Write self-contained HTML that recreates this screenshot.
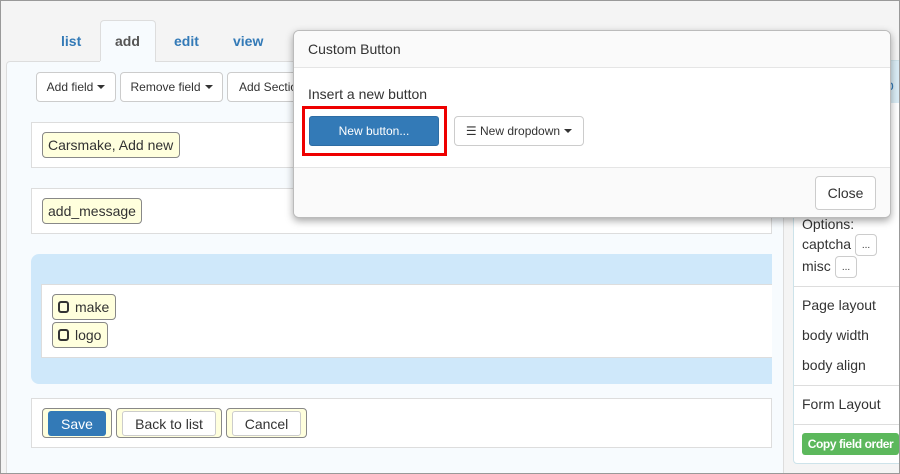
<!DOCTYPE html>
<html><head><style>
*{box-sizing:border-box;margin:0;padding:0}
html,body{width:900px;height:474px;overflow:hidden}
body{font-family:"Liberation Sans",sans-serif;font-size:14px;color:#333;background:#f4f4f4;position:relative}
.a{position:absolute}
.frame{left:0;top:0;width:900px;height:474px;border:1px solid #999}
.tab{font-weight:bold;color:#337ab7;font-size:14px;top:33px}
.btn{position:absolute;background:#fff;border:1px solid #ccc;border-radius:4px;font-size:12px;display:flex;align-items:center;justify-content:center;color:#333}
.caret{display:inline-block;border-top:4px solid #333;border-left:4px solid transparent;border-right:4px solid transparent;margin-left:4px}
.row{position:absolute;left:31px;width:741px;background:#fff;border:1px solid #ddd}
.tag{position:absolute;background:#ffffdd;border:1px solid #888;border-radius:4px;font-size:14px;display:flex;align-items:center;padding-left:5px}
.cb{display:inline-block;width:11px;height:12px;border:2.5px solid #333;border-radius:3px;margin-right:6px}
.side{font-size:14px;color:#333;left:802px}
.hr{position:absolute;left:794px;width:106px;height:1px;background:#ddd}
</style></head><body>
<div class="a" style="left:100px;top:20px;width:56px;height:44px;background:#f7fbfe;border:1px solid #ddd;border-bottom:none;border-radius:4px 4px 0 0"></div>
<div class="a tab" style="left:61px">list</div>
<div class="a tab" style="left:115px;color:#555">add</div>
<div class="a tab" style="left:174px">edit</div>
<div class="a tab" style="left:233px">view</div>
<div class="a" style="left:6px;top:61px;width:778px;height:413px;background:#f7fbfe;border:1px solid #ddd;border-bottom:none;border-radius:4px 0 0 0"></div>
<div class="a" style="left:100px;top:61px;width:55px;height:2px;background:#f7fbfe"></div>
<div class="btn" style="left:36px;top:72px;width:80px;height:30px">Add field<span class="caret"></span></div>
<div class="btn" style="left:120px;top:72px;width:103px;height:30px">Remove field<span class="caret"></span></div>
<div class="btn" style="left:227px;top:72px;width:90px;height:30px;justify-content:flex-start;padding-left:11px">Add Section</div>
<div class="row" style="top:122px;height:46px"></div>
<div class="tag" style="left:42px;top:132px;width:138px;height:26px">Carsmake, Add new</div>
<div class="row" style="top:188px;height:46px"></div>
<div class="tag" style="left:42px;top:198px;width:100px;height:26px">add_message</div>
<div class="a" style="left:31px;top:254px;width:741px;height:130px;background:#cfe8fa;border-radius:8px 0 0 8px"></div>
<div class="a" style="left:41px;top:284px;width:731px;height:74px;background:#fff;border:1px solid #ddd;border-right:none"></div>
<div class="tag" style="left:52px;top:294px;width:64px;height:26px"><span class="cb"></span>make</div>
<div class="tag" style="left:52px;top:322px;width:56px;height:26px"><span class="cb"></span>logo</div>
<div class="row" style="top:398px;height:50px"></div>
<div class="a" style="left:42px;top:408px;width:70px;height:30px;background:#ffffdd;border:1px solid #888;border-radius:4px"></div>
<div class="a" style="left:48px;top:411px;width:58px;height:25px;background:#337ab7;border-radius:3px;color:#fff;display:flex;align-items:center;justify-content:center">Save</div>
<div class="a" style="left:116px;top:408px;width:106px;height:30px;background:#ffffdd;border:1px solid #888;border-radius:4px"></div>
<div class="a" style="left:122px;top:411px;width:94px;height:25px;background:#fff;border:1px solid #ccc;border-radius:3px;display:flex;align-items:center;justify-content:center">Back to list</div>
<div class="a" style="left:226px;top:408px;width:81px;height:30px;background:#ffffdd;border:1px solid #888;border-radius:4px"></div>
<div class="a" style="left:232px;top:411px;width:69px;height:25px;background:#fff;border:1px solid #ccc;border-radius:3px;display:flex;align-items:center;justify-content:center">Cancel</div>
<div class="a" style="left:793px;top:60px;width:110px;height:404px;background:#fff;border:1px solid #cde3ea;border-radius:4px"></div>
<div class="a" style="left:794px;top:61px;width:106px;height:42px;background:#d9ecf5;color:#337ab7;font-size:14px;padding:16px 0 0 92px">p</div>
<div class="a side" style="top:216px">Options:</div>
<div class="a side" style="top:236px">captcha</div>
<div class="btn" style="left:855px;top:234px;width:22px;height:22px;font-size:10px">...</div>
<div class="a side" style="top:258px">misc</div>
<div class="btn" style="left:835px;top:256px;width:22px;height:22px;font-size:10px">...</div>
<div class="hr" style="top:286px"></div>
<div class="a side" style="top:297px">Page layout</div>
<div class="a side" style="top:327px">body width</div>
<div class="a side" style="top:357px">body align</div>
<div class="hr" style="top:385px"></div>
<div class="a side" style="top:396px">Form Layout</div>
<div class="hr" style="top:424px"></div>
<div class="a" style="left:802px;top:433px;width:97px;height:22px;background:#5cb85c;border-radius:3px;color:#fff;font-size:12px;font-weight:bold;letter-spacing:-0.4px;display:flex;align-items:center;justify-content:center">Copy field order</div>
<div class="a" style="left:293px;top:30px;width:598px;height:188px;background:#fff;border:1px solid #bbb;border-radius:6px;box-shadow:0 3px 8px rgba(0,0,0,.35);overflow:hidden">
 <div style="height:37px;background:#fafafa;border-bottom:1px solid #e5e5e5;padding:10px 0 0 14px;font-size:14px">Custom Button</div>
 <div style="position:absolute;left:14px;top:55px">Insert a new button</div>
 <div style="position:absolute;left:8px;top:75px;width:145px;height:50px;border:3px solid #e00"></div>
 <div style="position:absolute;left:15px;top:85px;width:130px;height:30px;background:#337ab7;border:1px solid #2e6da4;border-radius:3px;color:#fff;font-size:12px;display:flex;align-items:center;justify-content:center">New button...</div>
 <div class="btn" style="left:160px;top:85px;width:130px;height:30px">☰&nbsp;New dropdown<span class="caret"></span></div>
 <div style="position:absolute;left:0;top:136px;width:598px;height:52px;background:#fafafa;border-top:1px solid #e5e5e5"></div>
 <div class="btn" style="left:521px;top:145px;width:61px;height:34px;font-size:14px">Close</div>
</div>
<div class="a frame"></div>
</body></html>
